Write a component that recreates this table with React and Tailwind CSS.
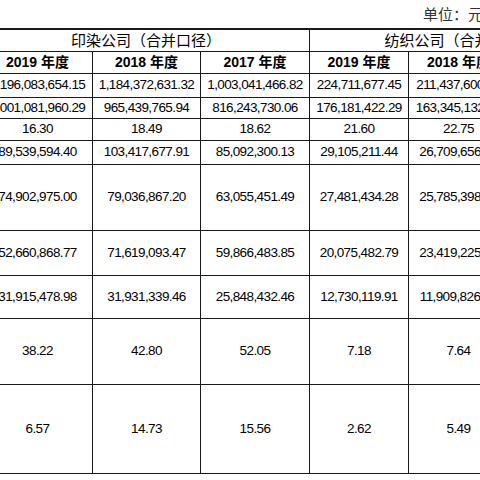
const cols = ['2019 年度', '2018 年度', '2017 年度', '2019 年度', '2018 年度', '2017 年度']

const rows = [
  { h: 'h-[23px]', v: ['1,196,083,654.15', '1,184,372,631.32', '1,003,041,466.82', '224,711,677.45', '211,437,600.82', '198,524,113.60'] },
  { h: 'h-[20px]', v: ['1,001,081,960.29', '965,439,765.94', '816,243,730.06', '176,181,422.29', '163,345,132.57', '152,004,861.33'] },
  { h: 'h-[21px]', v: ['16.30', '18.49', '18.62', '21.60', '22.75', '23.43'] },
  { h: 'h-[23px]', v: ['89,539,594.40', '103,417,677.91', '85,092,300.13', '29,105,211.44', '26,709,656.18', '24,612,090.75'] },
  { h: 'h-[65px]', v: ['74,902,975.00', '79,036,867.20', '63,055,451.49', '27,481,434.28', '25,785,398.66', '22,903,517.02'] },
  { h: 'h-[44px]', v: ['52,660,868.77', '71,619,093.47', '59,866,483.85', '20,075,482.79', '23,419,225.31', '21,338,709.94'] },
  { h: 'h-[42px]', v: ['31,915,478.98', '31,931,339.46', '25,848,432.46', '12,730,119.91', '11,909,826.40', '10,477,552.18'] },
  { h: 'h-[65px]', v: ['38.22', '42.80', '52.05', '7.18', '7.64', '8.12'] },
  { h: 'h-[88px]', v: ['6.57', '14.73', '15.56', '2.62', '5.49', '6.03'] },
]

function Cell({ children, className = '' }) {
  return (
    <div className={`bg-white flex items-center justify-center whitespace-nowrap ${className}`}>
      {children}
    </div>
  )
}

export default function App() {
  return (
    <div className="w-[480px] h-[480px] bg-white overflow-hidden text-black">
      {/* unit line */}
      <div className="h-[28px] flex items-center justify-end mr-[-3px] text-[15px] font-['Noto_Sans_CJK_SC',sans-serif] text-[#333]">
        单位：元
      </div>

      {/* table */}
      <div className="ml-[-17px] w-[640px] bg-[#1a1a1a] pt-[2px] pb-px grid gap-px grid-cols-[109px_107px_108px_98px_99px_100px] text-[13.5px] font-['Liberation_Sans',Arial,sans-serif] tracking-[-0.6px]">
        <Cell className="col-span-3 h-[21px] text-[15px] tracking-normal font-['Noto_Sans_CJK_SC',sans-serif]">
          印染公司（合并口径）
        </Cell>
        <Cell className="col-span-3 h-[21px] text-[15px] tracking-normal font-['Noto_Sans_CJK_SC',sans-serif]">
          纺织公司（合并口径）
        </Cell>

        {cols.map((c, i) => (
          <Cell key={i} className="h-[21px] text-[14px] font-bold tracking-normal font-['Liberation_Sans','Noto_Sans_CJK_SC',sans-serif]">
            {c}
          </Cell>
        ))}

        {rows.map((r, ri) =>
          r.v.map((v, ci) => (
            <Cell key={`${ri}-${ci}`} className={r.h}>
              {v}
            </Cell>
          ))
        )}
      </div>
    </div>
  )
}
